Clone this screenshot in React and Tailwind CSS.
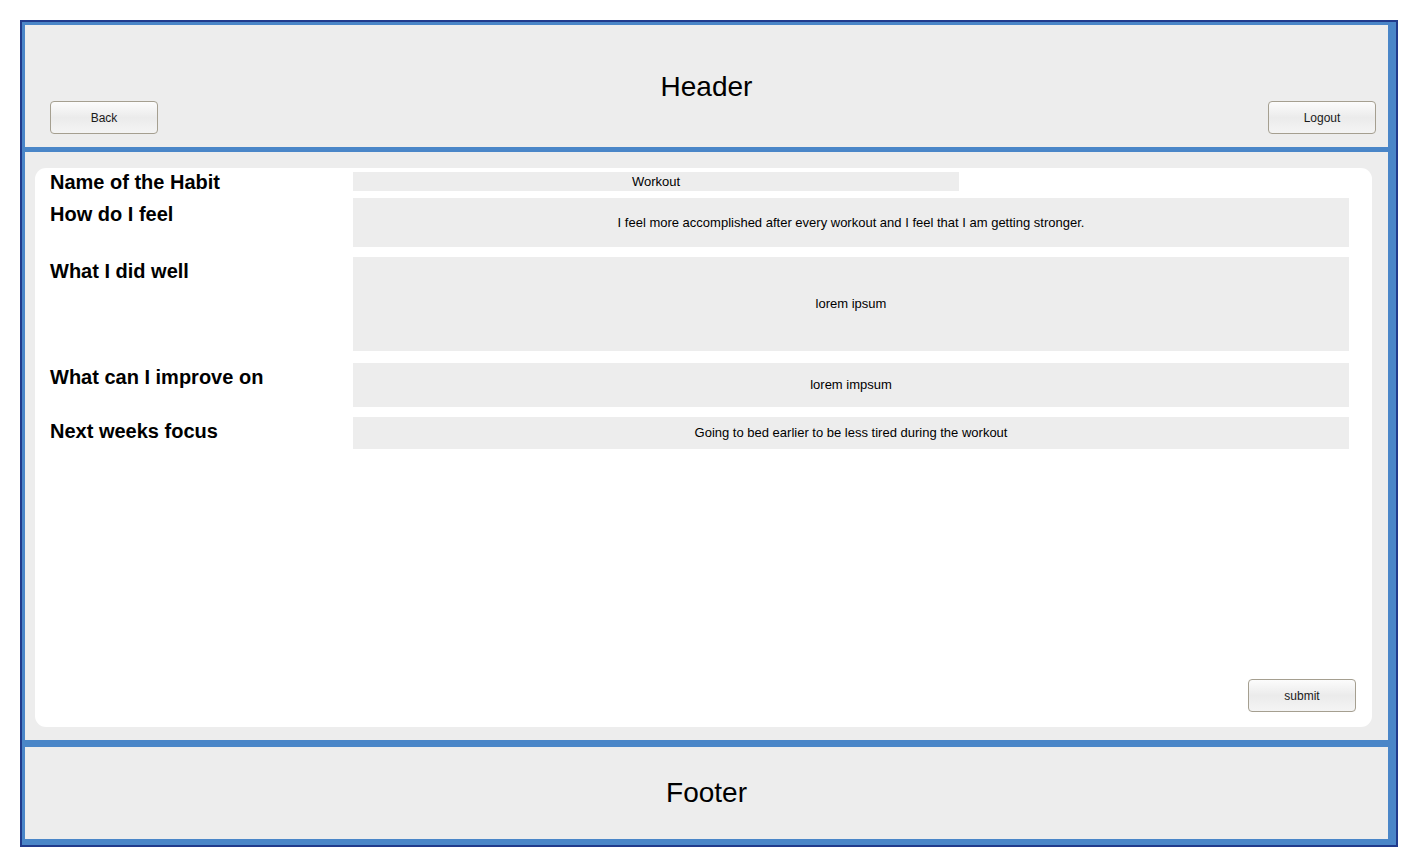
import React from 'react';

const Btn = ({ children }) => (
    <button className="w-[108px] h-[33px] rounded-[4px] border border-[#a59f90] bg-linear-to-b from-[#fcfcfc] via-[#ebebeb] to-[#f4f4f4] text-[12px] text-[#1a1a1a]">
        {children}
    </button>
);

const Row = ({ label, labelPad, fieldClass, children }) => (
    <div className="flex items-start">
        <div className={`w-[303px] shrink-0 text-[20px] leading-[23px] font-bold text-black ${labelPad}`}>{label}</div>
        <div className={`flex items-center justify-center bg-[#ededed] text-[13px] text-black ${fieldClass}`}>{children}</div>
    </div>
);

const App = () => {
    return (
        <div className="w-[1418px] h-[867px] bg-white p-5 font-['Liberation_Sans',Arial,sans-serif]">
            <div className="h-full border-2 border-[#213b8c]">
                <div className="h-full flex flex-col border-l-[3px] border-t-[3px] border-r-8 border-b-[6px] border-[#4a86c8] bg-[#ededed]">
                    {/* Header */}
                    <div className="h-[122px] flex flex-col pt-[48px]">
                        <div className="text-center text-[28px] leading-[28px] text-black">Header</div>
                        <div className="flex justify-between pl-[25px] pr-[12px]">
                            <Btn>Back</Btn>
                            <Btn>Logout</Btn>
                        </div>
                    </div>
                    <div className="h-[5px] bg-[#4a86c8]" />

                    {/* Content */}
                    <div className="flex-1 pt-4 pb-[13px] pl-[10px] pr-4 flex">
                        <div className="flex-1 bg-white rounded-[11px] flex flex-col pt-[2px] pl-[15px] pr-[23px] pb-[15px]">
                            <Row label="Name of the Habit" labelPad="pt-[1px]" fieldClass="w-[606px] h-[19px] mt-[2px]">Workout</Row>
                            <div className="mt-[4px]">
                                <Row label="How do I feel" labelPad="pt-[5px]" fieldClass="flex-1 h-[49px]">
                                    I feel more accomplished after every workout and I feel that I am getting stronger.
                                </Row>
                            </div>
                            <div className="mt-[10px]">
                                <Row label="What I did well" labelPad="pt-[3px]" fieldClass="flex-1 h-[94px]">lorem ipsum</Row>
                            </div>
                            <div className="mt-[12px]">
                                <Row label="What can I improve on" labelPad="pt-[3px]" fieldClass="flex-1 h-[44px]">lorem impsum</Row>
                            </div>
                            <div className="mt-[10px]">
                                <Row label="Next weeks focus" labelPad="pt-[3px]" fieldClass="flex-1 h-[32px]">
                                    Going to bed earlier to be less tired during the workout
                                </Row>
                            </div>
                            <div className="flex-1" />
                            <div className="flex justify-end -mr-[7px]">
                                <Btn>submit</Btn>
                            </div>
                        </div>
                    </div>
                    <div className="h-[7px] bg-[#4a86c8]" />

                    {/* Footer */}
                    <div className="h-[92px] flex items-center justify-center text-[28px] text-black">Footer</div>
                </div>
            </div>
        </div>
    );
};

export default App;
